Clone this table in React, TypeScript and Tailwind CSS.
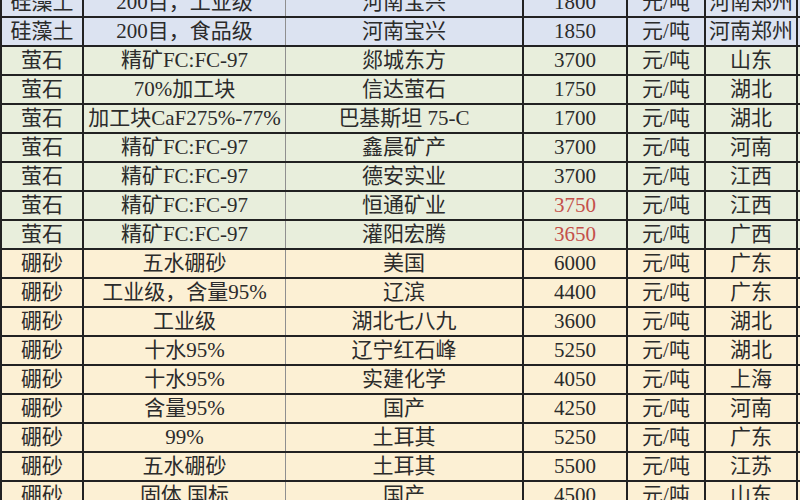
import React from "react";

type Row = {
  a: string;
  b: string;
  c: string;
  p: string;
  u: string;
  r: string;
  g: "blue" | "green" | "yellow";
  red?: boolean;
};

const rows: Row[] = [
  { a: "硅藻土", b: "200目，工业级", c: "河南宝兴", p: "1800", u: "元/吨", r: "河南郑州", g: "blue" },
  { a: "硅藻土", b: "200目，食品级", c: "河南宝兴", p: "1850", u: "元/吨", r: "河南郑州", g: "blue" },
  { a: "萤石", b: "精矿FC:FC-97", c: "郯城东方", p: "3700", u: "元/吨", r: "山东", g: "green" },
  { a: "萤石", b: "70%加工块", c: "信达萤石", p: "1750", u: "元/吨", r: "湖北", g: "green" },
  { a: "萤石", b: "加工块CaF275%-77%", c: "巴基斯坦 75-C", p: "1700", u: "元/吨", r: "湖北", g: "green" },
  { a: "萤石", b: "精矿FC:FC-97", c: "鑫晨矿产", p: "3700", u: "元/吨", r: "河南", g: "green" },
  { a: "萤石", b: "精矿FC:FC-97", c: "德安实业", p: "3700", u: "元/吨", r: "江西", g: "green" },
  { a: "萤石", b: "精矿FC:FC-97", c: "恒通矿业", p: "3750", u: "元/吨", r: "江西", g: "green", red: true },
  { a: "萤石", b: "精矿FC:FC-97", c: "灌阳宏腾", p: "3650", u: "元/吨", r: "广西", g: "green", red: true },
  { a: "硼砂", b: "五水硼砂", c: "美国", p: "6000", u: "元/吨", r: "广东", g: "yellow" },
  { a: "硼砂", b: "工业级，含量95%", c: "辽滨", p: "4400", u: "元/吨", r: "广东", g: "yellow" },
  { a: "硼砂", b: "工业级", c: "湖北七八九", p: "3600", u: "元/吨", r: "湖北", g: "yellow" },
  { a: "硼砂", b: "十水95%", c: "辽宁红石峰", p: "5250", u: "元/吨", r: "湖北", g: "yellow" },
  { a: "硼砂", b: "十水95%", c: "实建化学", p: "4050", u: "元/吨", r: "上海", g: "yellow" },
  { a: "硼砂", b: "含量95%", c: "国产", p: "4250", u: "元/吨", r: "河南", g: "yellow" },
  { a: "硼砂", b: "99%", c: "土耳其", p: "5250", u: "元/吨", r: "广东", g: "yellow" },
  { a: "硼砂", b: "五水硼砂", c: "土耳其", p: "5500", u: "元/吨", r: "江苏", g: "yellow" },
  { a: "硼砂", b: "固体 国标", c: "国产", p: "4500", u: "元/吨", r: "山东", g: "yellow" },
];

const bg: Record<Row["g"], string> = {
  blue: "bg-[#dce3f1]",
  green: "bg-[#e8eedc]",
  yellow: "bg-[#fcf0d4]",
};

export default function App() {
  return (
    <div
      className="w-[800px] h-[500px] overflow-hidden bg-white text-[#2b2b2b] text-[21px] leading-none"
      style={{ fontFamily: '"Liberation Serif", "Noto Sans CJK SC", serif' }}
    >
      <div className="mt-[-11px] flex flex-col border-l-2 border-[#222]">
        {rows.map((row, i) => (
          <div key={i} className={`flex h-[29px] border-b-2 border-[#222] ${bg[row.g]}`}>
            <div className="w-[82px] flex items-center justify-center border-r-2 border-[#222]">{row.a}</div>
            <div className="w-[202px] flex items-center justify-center border-r border-[#8f8f8f] whitespace-nowrap">{row.b}</div>
            <div className="w-[238px] flex items-center justify-center border-r-2 border-[#222] whitespace-nowrap">{row.c}</div>
            <div
              className={`w-[104px] flex items-center justify-center border-r-2 border-[#222] ${
                row.red ? "text-[#c4504a]" : ""
              }`}
            >
              {row.p}
            </div>
            <div className="w-[78px] flex items-center justify-center border-r-2 border-[#222]">{row.u}</div>
            <div className="w-[92px] flex items-center justify-center border-r-2 border-[#222] whitespace-nowrap">{row.r}</div>
          </div>
        ))}
      </div>
    </div>
  );
}
